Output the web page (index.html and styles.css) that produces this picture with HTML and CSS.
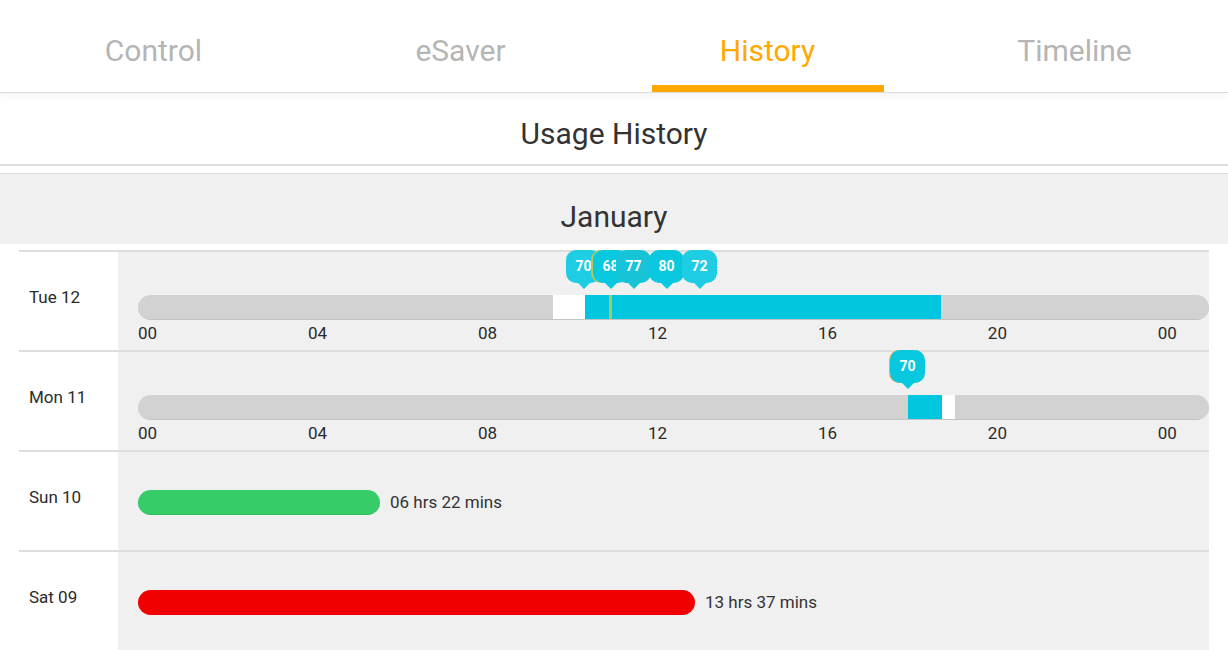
FILE: index.html
```html
<!DOCTYPE html>
<html>
<head>
<meta charset="utf-8">
<link rel="stylesheet" href="styles.css">
</head>
<body>
<nav class="tabs">
  <a class="tab">Control</a>
  <a class="tab">eSaver</a>
  <a class="tab tab--active">History</a>
  <a class="tab">Timeline</a>
</nav>
<h1 class="page-title">Usage History</h1>
<section class="month">
  <h2 class="month-title">January</h2>
  <div class="days">
    <div class="day">
      <div class="day-label">Tue 12</div>
      <div class="day-chart">
        <div class="track">
          <div class="bar">
            <span class="seg seg--idle" style="left:415px;width:32px"></span>
            <span class="seg seg--on" style="left:447px;width:356px"></span>
            <span class="seg seg--mark" style="left:471px;width:3px"></span>
          </div>
          <span class="bubble bubble--light" style="left:428px">70</span>
          <span class="bubble bubble--green" style="left:455px">68</span>
          <span class="bubble bubble--dark" style="left:478px">77</span>
          <span class="bubble" style="left:511px">80</span>
          <span class="bubble bubble--light" style="left:544px">72</span>
        </div>
        <div class="ticks"><span>00</span><span>04</span><span>08</span><span>12</span><span>16</span><span>20</span><span>00</span></div>
      </div>
    </div>
    <div class="day">
      <div class="day-label">Mon 11</div>
      <div class="day-chart">
        <div class="track">
          <div class="bar">
            <span class="seg seg--on" style="left:770px;width:34px"></span>
            <span class="seg seg--idle" style="left:804px;width:13px"></span>
          </div>
          <span class="bubble bubble--orange" style="left:752px">70</span>
        </div>
        <div class="ticks"><span>00</span><span>04</span><span>08</span><span>12</span><span>16</span><span>20</span><span>00</span></div>
      </div>
    </div>
    <div class="day">
      <div class="day-label">Sun 10</div>
      <div class="day-chart day-chart--summary">
        <div class="total total--good" style="width:242px"></div>
        <span class="total-text">06 hrs 22 mins</span>
      </div>
    </div>
    <div class="day">
      <div class="day-label">Sat 09</div>
      <div class="day-chart day-chart--summary">
        <div class="total total--bad" style="width:557px"></div>
        <span class="total-text">13 hrs 37 mins</span>
      </div>
    </div>
  </div>
</section>
</body>
</html>
```

FILE: styles.css
```css
* { box-sizing: border-box; }
html, body { margin: 0; padding: 0; background: #fff; }
body {
  font-family: Roboto, "Liberation Sans", sans-serif;
  color: #333;
  overflow: hidden;
}

.tabs {
  display: flex;
  height: 93px;
  border-bottom: 1px solid #dcdcdc;
  box-shadow: 0 3px 8px rgba(0, 0, 0, 0.05);
  position: relative;
  z-index: 1;
}
.tab {
  flex: 1;
  display: flex;
  align-items: center;
  justify-content: center;
  font-size: 30px;
  color: #b5b5b5;
  padding-top: 8px;
  position: relative;
}
.tab--active { color: #ffa800; }
.tab--active::after {
  content: "";
  position: absolute;
  left: 38px;
  right: 37px;
  bottom: 0;
  height: 7px;
  background: #ffa800;
}

.page-title {
  margin: 0;
  height: 73px;
  padding-top: 24px;
  font-size: 30px;
  font-weight: 400;
  line-height: 34px;
  text-align: center;
  color: #333;
  border-bottom: 2px solid #dcdcdc;
}

.month { margin-top: 7px; }
.month-title {
  margin: 0;
  height: 71px;
  padding-top: 26px;
  border-top: 1px solid #dcdcdc;
  background: #f0f0f0;
  font-size: 30px;
  font-weight: 400;
  line-height: 34px;
  text-align: center;
  color: #333;
}

.days { padding: 6px 19px 0; }
.day {
  display: flex;
  height: 100px;
  border-top: 2px solid #dedede;
}
.day-label {
  width: 99px;
  flex: none;
  padding: 35px 0 0 10px;
  font-size: 17px;
  line-height: 20px;
  color: #2b2b2b;
}
.day-chart {
  flex: 1;
  background: #f0f0f0;
  padding: 43px 0 0 20px;
}
.day-chart--summary {
  display: flex;
  align-items: flex-start;
  padding-top: 38px;
}

.track { position: relative; }
.bar {
  position: relative;
  height: 25px;
  border-radius: 13px;
  background: #d3d2d3;
  border-bottom: 1px solid #c3c3c3;
  overflow: hidden;
}
.seg {
  position: absolute;
  top: 0;
  bottom: 0;
}
.seg--idle { background: #fff; }
.seg--on { background: #00c7df; }
.seg--mark { background: #a9c85a; }

.bubble {
  position: absolute;
  bottom: 37px;
  width: 35px;
  height: 33px;
  border-radius: 10px;
  background: #08c8e0;
  color: #fff;
  font-size: 14px;
  font-weight: 700;
  line-height: 33px;
  text-align: center;
}
.bubble::after {
  content: "";
  position: absolute;
  left: 50%;
  bottom: -6px;
  margin-left: -6px;
  border-left: 6px solid transparent;
  border-right: 6px solid transparent;
  border-top: 6px solid #08c8e0;
}
.bubble--light { background: #1ecde4; }
.bubble--light::after { border-top-color: #1ecde4; }
.bubble--dark { background: #17c3d6; }
.bubble--dark::after { border-top-color: #17c3d6; }
.bubble--green { box-shadow: -2px 0 0 #b4c95a; }
.bubble--orange { box-shadow: -1px 0 0 #f2b33c; }

.ticks {
  display: flex;
  justify-content: space-between;
  margin: 3px 32px 0 0;
  font-size: 17px;
  line-height: 20px;
  color: #2b2b2b;
}

.total {
  height: 25px;
  border-radius: 13px;
}
.total--good { background: #36cc68; border-bottom: 1px solid #2fbd5e; }
.total--bad { background: #f00000; }
.total-text {
  margin-left: 10px;
  font-size: 17px;
  line-height: 25px;
  color: #333;
}
```
